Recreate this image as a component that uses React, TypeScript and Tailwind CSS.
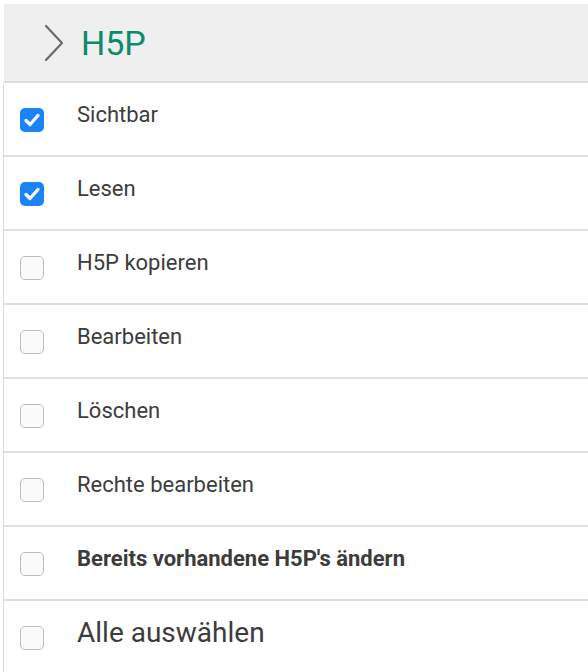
const items = [
  { label: 'Sichtbar', checked: true },
  { label: 'Lesen', checked: true },
  { label: 'H5P kopieren', checked: false },
  { label: 'Bearbeiten', checked: false },
  { label: 'Löschen', checked: false },
  { label: 'Rechte bearbeiten', checked: false },
  { label: "Bereits vorhandene H5P's ändern", checked: false, bold: true },
];

function Checkbox({ checked }: { checked: boolean }) {
  if (checked) {
    return (
      <div className="w-[24px] h-[24px] rounded-[5px] bg-[#1a84f7] flex items-center justify-center shrink-0">
        <svg width="24" height="24" viewBox="0 0 24 24" fill="none">
          <path d="M6 12.5 L10 16.5 L18 7.5" stroke="white" strokeWidth="3.2" strokeLinecap="round" strokeLinejoin="round" />
        </svg>
      </div>
    );
  }
  return <div className="w-[24px] h-[24px] rounded-[5px] border border-[#bdbdbd] bg-[#fafafa] shrink-0" />;
}

export default function App() {
  return (
    <div className="w-[588px] h-[672px] overflow-hidden bg-white pt-[4px] pl-[3px]" style={{ fontFamily: 'Roboto, sans-serif' }}>
      {/* Section header */}
      <div className="ml-[1px] h-[79px] bg-[#efefef] border-b-2 border-[#dedede] flex items-center">
        <svg className="ml-[40px] shrink-0" width="20" height="38" viewBox="0 0 20 38" fill="none">
          <path d="M2 2 L18 19 L2 36" stroke="#6a6a6a" strokeWidth="2.2" strokeLinecap="round" strokeLinejoin="round" />
        </svg>
        <span className="ml-[17px] text-[34px] leading-none text-[#0d8a6b]">H5P</span>
      </div>

      {/* Permissions */}
      <div className="border-l border-[#dcdcdc]">
        {items.map((item) => (
          <div key={item.label} className="h-[74px] border-b-2 border-[#e0e0e0] flex items-start">
            <div className="ml-[16px] mt-[25px]">
              <Checkbox checked={item.checked} />
            </div>
            <span
              className={`ml-[33px] mt-[19px] text-[22px] leading-[26px] text-[#3c3c3c] ${item.bold ? 'font-bold text-[20px]' : ''}`}
            >
              {item.label}
            </span>
          </div>
        ))}
        <div className="h-[74px] flex items-start">
          <div className="ml-[16px] mt-[25px]">
            <Checkbox checked={false} />
          </div>
          <span className="ml-[33px] mt-[16px] text-[28px] leading-[32px] text-[#3c3c3c]">Alle auswählen</span>
        </div>
      </div>
    </div>
  );
}
